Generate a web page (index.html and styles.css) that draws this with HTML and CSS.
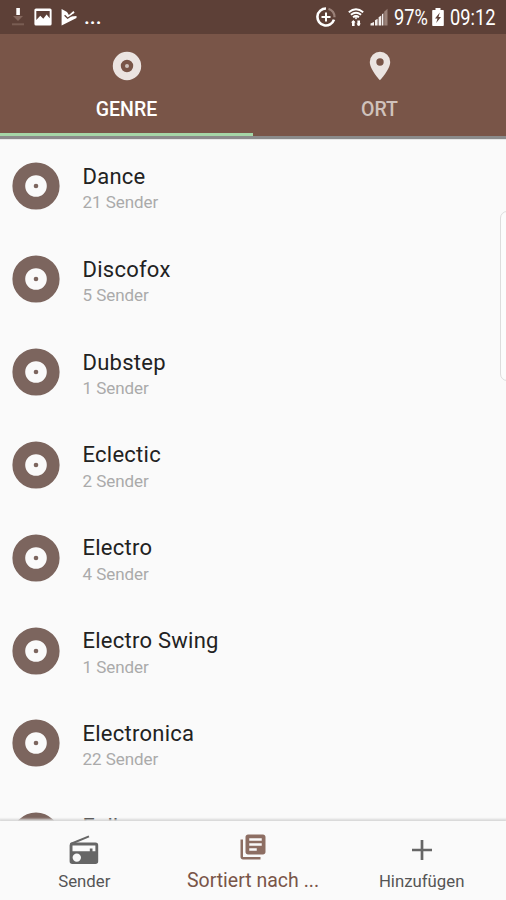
FILE: index.html
```html
<!DOCTYPE html>
<html lang="de">
<head>
<meta charset="utf-8">
<title>Sender</title>
<link rel="stylesheet" href="styles.css">
</head>
<body>
<svg class="defs" width="0" height="0">
  <symbol id="disc" viewBox="0 0 48 48"><circle cx="24" cy="24" r="17.2" fill="none" stroke="currentColor" stroke-width="12.8"/><circle cx="24" cy="24" r="2.3" fill="currentColor"/></symbol>
</svg>
<div class="screen">
  <header class="status">
    <div class="status-left">
      <svg width="14" height="20" viewBox="0 0 14 20"><path d="M5.3 1h3.6v7H5.3z" fill="#fff"/><path d="M2 9h10l-5 5z" fill="#84675d"/><path d="M1 16.3h12v2H1z" fill="#795d53"/></svg>
      <svg width="18" height="18" viewBox="0 0 18 18"><path fill="#fff" fill-rule="evenodd" d="M2 .5h14a1.6 1.6 0 0 1 1.6 1.6v13.8a1.6 1.6 0 0 1-1.6 1.6H2A1.6 1.6 0 0 1 .4 15.900V2.100A1.600 1.600 0 0 1 2 .5zM2.300 3v9l4-4.200 3 3 3.300-4.300 3.100 3.800V3z"/></svg>
      <svg width="16" height="18" viewBox="0 0 16 18"><path fill="#fff" d="M.6 1 6 4.100l1.900 3 4.500-4.100 1.200 1.400-4 4.200L15.500 8v2L.6 17.500z"/><path d="m3.600 7.200 3 3 6-4" fill="none" stroke="#5d4037" stroke-width="1.300"/></svg>
      <span class="dots">...</span>
    </div>
    <div class="status-right">
      <svg class="saver" width="20" height="20" viewBox="0 0 20 20" fill="none" stroke="#fff"><path d="M10 1.500a8.500 8.500 0 1 0 8 11.200" stroke-width="2.600"/><path d="M12.500 1.800a8.500 8.500 0 0 1 6 8.500" stroke="#9b8178" stroke-width="2.300"/><path d="M10 5.500v9M5.500 10h9" stroke-width="2"/></svg>
      <svg class="wifi" width="16" height="19" viewBox="0 0 16 19" fill="none" stroke="#fff"><path d="M.8 4.200Q8-1.600 15.200 4.200M2.900 6.800q5.100-4 10.200 0M5 9.200q3-2.300 6 0" stroke-width="1.900"/><path d="m6.200 9.200 1.800 2.300 1.800-2.300z" fill="#fff" stroke="none"/><path d="M5.300 18v-5M10.700 12.500v5" stroke-width="2.600"/><path d="m3 14.500 2.300-2.500 2.200 2.500zM8.500 15.500h4.400l-2.200 2.500z" fill="#fff" stroke="none"/></svg>
      <svg class="signal" width="18" height="18" viewBox="0 0 18 18"><path d="M.5 17.500v-2L4 14v3.500zM5 17.500v-5.300l2.600-1.400v6.700zM8.600 17.500V9.300l2.700-1.900v10.100zM12 17.500V6.300l1.400-1v12.200z" fill="#f3eeec"/><path d="M14.200 17.500V3.700L17.500.8v16.700z" fill="#9a8178"/></svg>
      <span class="pct">97%</span>
      <svg class="battery" width="12" height="18" viewBox="0 0 12 18"><path fill="#fff" d="M3.500 0h5v2H11q.8 0 .8.800v14.400q0 .8-.8.800H1q-.8 0-.8-.8V2.800Q.2 2 1 2h2.500z"/><path d="M7.800 4.500 3 10.500h2.500L4.200 15 9 9H6.500z" fill="#5d4037"/></svg>
      <span class="clock">09:12</span>
    </div>
  </header>
  <nav class="tabs">
    <div class="tab active">
      <svg width="30" height="30" viewBox="0 0 30 30"><circle cx="15" cy="15" r="10.200" fill="none" stroke="currentColor" stroke-width="8"/><circle cx="15" cy="15" r="2" fill="#cfc2bc"/></svg>
      <span>GENRE</span>
    </div>
    <div class="tab">
      <svg width="30" height="30" viewBox="0 0 30 30"><path fill="currentColor" fill-rule="evenodd" d="M15 .8A10.200 10.200 0 0 0 4.800 11C4.800 18.500 15 29.200 15 29.200S25.200 18.500 25.200 11A10.200 10.200 0 0 0 15 .8zm0 6.500a3.700 3.700 0 1 1 0 7.400 3.700 3.700 0 0 1 0-7.400z"/></svg>
      <span>ORT</span>
    </div>
  </nav>
  <main class="list">
    <div class="row"><svg class="disc"><use href="#disc"/></svg><div class="info"><div class="name">Dance</div><div class="count">21 Sender</div></div></div>
    <div class="row"><svg class="disc"><use href="#disc"/></svg><div class="info"><div class="name">Discofox</div><div class="count">5 Sender</div></div></div>
    <div class="row"><svg class="disc"><use href="#disc"/></svg><div class="info"><div class="name">Dubstep</div><div class="count">1 Sender</div></div></div>
    <div class="row"><svg class="disc"><use href="#disc"/></svg><div class="info"><div class="name">Eclectic</div><div class="count">2 Sender</div></div></div>
    <div class="row"><svg class="disc"><use href="#disc"/></svg><div class="info"><div class="name">Electro</div><div class="count">4 Sender</div></div></div>
    <div class="row"><svg class="disc"><use href="#disc"/></svg><div class="info"><div class="name">Electro Swing</div><div class="count">1 Sender</div></div></div>
    <div class="row"><svg class="disc"><use href="#disc"/></svg><div class="info"><div class="name">Electronica</div><div class="count">22 Sender</div></div></div>
    <div class="row"><svg class="disc"><use href="#disc"/></svg><div class="info"><div class="name">Folk</div></div></div>
  </main>
  <nav class="bottom">
    <div class="item">
      <svg width="30" height="30" viewBox="0 0 30 30"><path d="M1.500 9 20 1.300" stroke="#666" stroke-width="2" fill="none"/><path fill="#666" fill-rule="evenodd" d="M3 7.500h23.500a2.700 2.700 0 0 1 2.700 2.700v16a2.700 2.700 0 0 1-2.700 2.700H3.300a2.700 2.700 0 0 1-2.700-2.700v-16A2.700 2.700 0 0 1 3 7.500zM3.500 10.600v5.600h17.300v-2.700h2.700v2.700h2.900v-5.600zM7.800 18.400a4.200 4.200 0 1 0 0 8.400 4.200 4.200 0 0 0 0-8.400z"/></svg>
      <span>Sender</span>
    </div>
    <div class="item selected">
      <svg width="30" height="30" viewBox="0 0 24 24"><path fill="currentColor" d="M4 6H2v14c0 1.100.9 2 2 2h14v-2H4V6zm16-4H8c-1.100 0-2 .9-2 2v12c0 1.100.9 2 2 2h12c1.100 0 2-.9 2-2V4c0-1.100-.9-2-2-2zm-1 9H9V9h10v2zm-4 4H9v-2h6v2zm4-8H9V5h10v2z"/></svg>
      <span>Sortiert nach ...</span>
    </div>
    <div class="item add">
      <svg width="30" height="30" viewBox="0 0 30 30"><path d="M15 5v20M5 15h20" stroke="#666" stroke-width="2.700"/></svg>
      <span>Hinzufügen</span>
    </div>
  </nav>
  <div class="edge-handle"></div>
</div>
</body>
</html>
```
FILE: styles.css
```css
* { box-sizing: border-box; }
body { margin: 0; background: #fafafa; font-family: Roboto, "Liberation Sans", sans-serif; }
svg { display: block; flex: none; }
.defs { position: absolute; }
.screen { position: relative; display: flex; flex-direction: column; width: 506px; height: 900px; overflow: hidden; }
.status { flex: none; height: 34px; background: #5d4037; color: #fff; display: flex; justify-content: space-between; padding: 0 9px 0 11px; }
.status-left, .status-right { display: flex; align-items: center; }
.status-left { gap: 9px; }
.dots { font-size: 21px; line-height: 24px; font-weight: 500; margin-left: -2px; }
.saver { margin-right: 12px; }
.wifi { margin-right: 6px; }
.signal { margin-right: 6px; }
.battery { margin: 0 6px 0 4px; }
.pct, .clock { font-size: 22px; line-height: 34px; padding-top: 1px; white-space: nowrap; transform-origin: left; }
.pct { width: 34px; transform: scaleX(.83); }
.clock { width: 47px; transform: scaleX(.83); }
.tabs { position: relative; z-index: 1; flex: none; display: flex; height: 102px; background: #795548; box-shadow: 0 2px 1px 1px #8b8b8b; }
.tab { flex: 1; display: flex; flex-direction: column; align-items: center; padding-top: 17px; color: #d0c2bc; font-size: 19.5px; font-weight: 500; line-height: 24px; }
.tab svg { color: #ebe4e1; }
.tab span { margin-top: 17px; }
.active { color: #fff; border-bottom: 3px solid #a5d6a7; }
.list { flex: 1; min-height: 0; overflow: hidden; padding-top: 4px; }
.row { display: flex; height: 92.83px; align-items: center; padding-left: 11.500px; gap: 23px; }
.disc { width: 48px; height: 48px; color: #7c655e; }
.info { height: 56px; }
.name { font-size: 22px; line-height: 28px; color: #222; letter-spacing: .25px; padding-top: 4.5px; }
.count { font-size: 17px; line-height: 22px; color: #aaa; margin-top: .5px; letter-spacing: -.05px; }
.bottom { position: relative; flex: none; display: flex; height: 79px; background: #fafafa; box-shadow: 0 -1px 2px 1px #d8d8d8; }
.item { flex: 1 0 0; display: flex; flex-direction: column; align-items: center; padding-top: 14px; font-size: 16.8px; line-height: 22px; color: #555; white-space: nowrap; }
.item span { margin-top: 5px; }
.selected { color: #795548; padding-top: 11px; font-size: 19.500px; }
.selected svg { color: #8d6e63; }
.selected span { margin-top: 8px; }
.edge-handle { position: absolute; left: 500px; top: 211px; width: 14px; height: 170px; border: 1.500px solid #ddd; border-radius: 8px; background: #fcfcfc; }
```
